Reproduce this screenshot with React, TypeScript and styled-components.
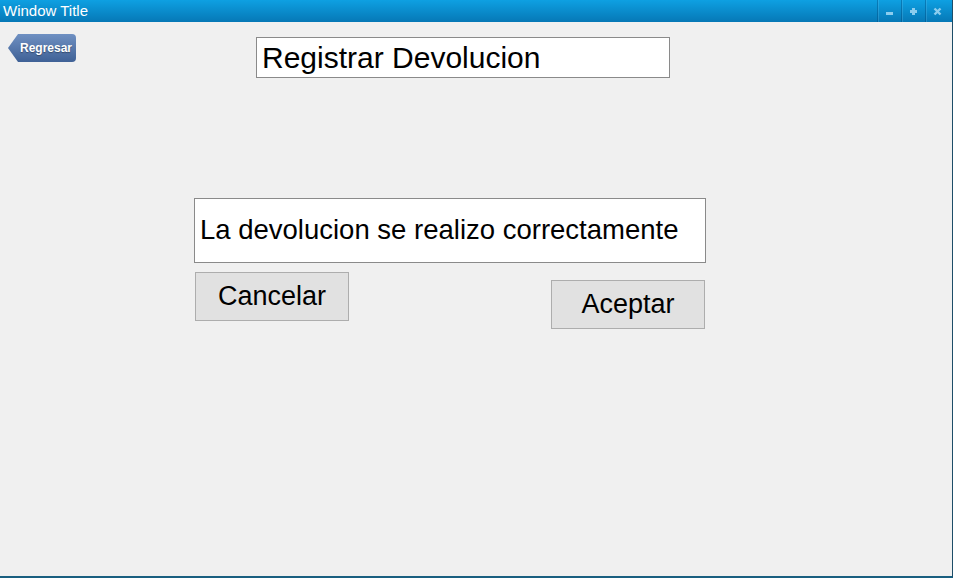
import React from "react";
import styled, { createGlobalStyle } from "styled-components";

const Global = createGlobalStyle`
  html, body { margin: 0; padding: 0; background: #f0f0f0; }
  body { font-family: "Liberation Sans", Arial, sans-serif; }
`;

const Window = styled.div`
  width: 953px;
  height: 578px;
  box-sizing: border-box;
  display: flex;
  flex-direction: column;
  background: #f0f0f0;
  border-right: 1px solid #1d4d68;
  border-bottom: 2px solid #1a5f80;
  overflow: hidden;
`;

const TitleBar = styled.div`
  height: 22px;
  flex: none;
  display: flex;
  align-items: center;
  justify-content: space-between;
  background: linear-gradient(#0ea0e2, #0678b6);
  color: #fff;
  font-size: 15px;
  padding-left: 3px;
`;

const TitleText = styled.span`
  line-height: 22px;
`;

const Controls = styled.div`
  display: flex;
  height: 22px;
  margin-right: 3px;
`;

const CtrlButton = styled.div`
  width: 23px;
  height: 22px;
  display: flex;
  align-items: center;
  justify-content: center;
  border-left: 1px solid rgba(0, 60, 110, 0.35);
  box-shadow: inset 1px 0 0 rgba(120, 200, 240, 0.25);
`;

const Body = styled.div`
  flex: 1;
  display: flex;
  flex-direction: column;
`;

const TopRow = styled.div`
  display: flex;
  align-items: flex-start;
  padding-left: 8px;
`;

const BackButton = styled.button`
  margin-top: 12px;
  width: 68px;
  height: 28px;
  border: none;
  padding: 0 0 0 8px;
  clip-path: polygon(0 50%, 10px 0, 100% 0, 100% 100%, 10px 100%);
  border-radius: 0 4px 4px 0;
  background: linear-gradient(#6f90c2, #3f6196);
  color: #fff;
  font-family: "Liberation Sans", Arial, sans-serif;
  font-size: 12px;
  font-weight: bold;
  text-shadow: 0 1px 1px rgba(0, 0, 0, 0.35);
  cursor: pointer;
`;

const TitleBox = styled.div`
  margin-top: 15px;
  margin-left: 180px;
  width: 414px;
  height: 41px;
  box-sizing: border-box;
  border: 1px solid #8a8a8a;
  background: #fff;
  display: flex;
  align-items: center;
  padding-left: 5px;
  font-size: 30px;
  color: #000;
`;

const Dialog = styled.div`
  margin-top: 120px;
  margin-left: 194px;
  width: 512px;
  display: flex;
  flex-direction: column;
`;

const Message = styled.div`
  height: 65px;
  box-sizing: border-box;
  border: 1px solid #8a8a8a;
  background: #fff;
  display: flex;
  align-items: center;
  padding-left: 5px;
  padding-bottom: 1px;
  font-size: 27.5px;
  color: #000;
`;

const ButtonRow = styled.div`
  display: flex;
  justify-content: space-between;
  align-items: flex-start;
  padding-left: 1px;
  padding-right: 1px;
  margin-top: 9px;
`;

const ActionButton = styled.button<{ $offset?: number }>`
  margin-top: ${(p) => p.$offset ?? 0}px;
  width: 154px;
  height: 49px;
  box-sizing: border-box;
  border: 1px solid #adadad;
  background: #e1e1e1;
  color: #000;
  font-family: "Liberation Sans", Arial, sans-serif;
  font-size: 27px;
  padding: 0 0 1px 0;
  cursor: pointer;
`;

export default function App() {
  return (
    <>
      <Global />
      <Window>
        <TitleBar>
          <TitleText>Window Title</TitleText>
          <Controls>
            <CtrlButton>
              <svg width="9" height="9" viewBox="0 0 9 9">
                <rect x="1" y="5" width="7" height="3" fill="#8ccdee" />
              </svg>
            </CtrlButton>
            <CtrlButton>
              <svg width="9" height="9" viewBox="0 0 9 9">
                <rect x="3" y="1" width="3" height="7" fill="#8ccdee" />
                <rect x="1" y="3" width="7" height="3" fill="#8ccdee" />
              </svg>
            </CtrlButton>
            <CtrlButton>
              <svg width="9" height="9" viewBox="0 0 9 9">
                <path d="M1.5 1.5 L7.5 7.5 M7.5 1.5 L1.5 7.5" stroke="#8ccdee" strokeWidth="2.4" />
              </svg>
            </CtrlButton>
          </Controls>
        </TitleBar>
        <Body>
          <TopRow>
            <BackButton>Regresar</BackButton>
            <TitleBox>Registrar Devolucion</TitleBox>
          </TopRow>
          <Dialog>
            <Message>La devolucion se realizo correctamente</Message>
            <ButtonRow>
              <ActionButton>Cancelar</ActionButton>
              <ActionButton $offset={8}>Aceptar</ActionButton>
            </ButtonRow>
          </Dialog>
        </Body>
      </Window>
    </>
  );
}
